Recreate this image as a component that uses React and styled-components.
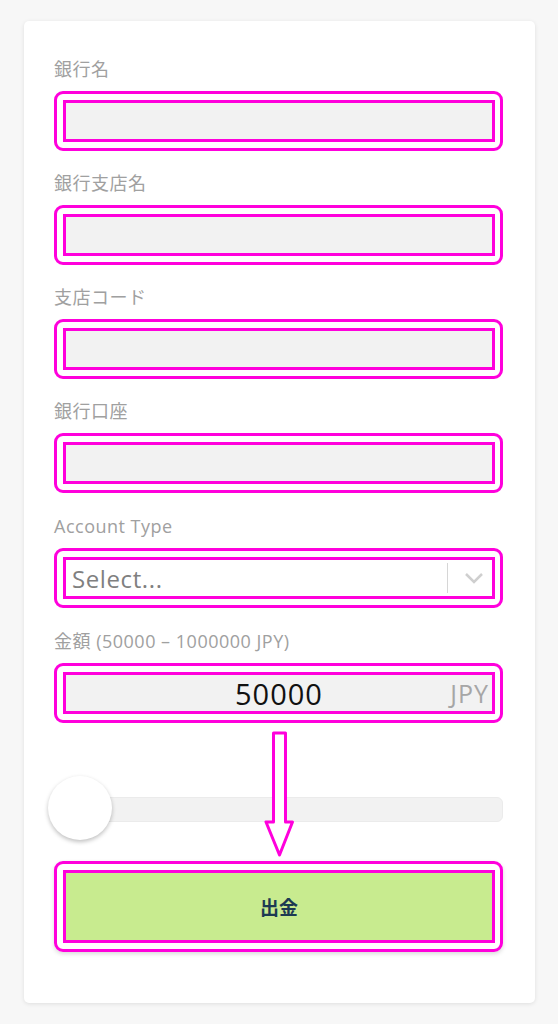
import React from 'react';
import styled, { createGlobalStyle } from 'styled-components';

const MAGENTA = '#ff00dc';

const GlobalStyle = createGlobalStyle`
    html, body {
        margin: 0;
        padding: 0;
        background: #f7f7f7;
        font-family: "Open Sans", "Noto Sans CJK JP", sans-serif;
    }
`;

const Page = styled.div`
    padding: 21px 23px 21px 24px;
`;

const Card = styled.div`
    background: #fff;
    border-radius: 5px;
    box-shadow: 0 1px 4px rgba(0, 0, 0, 0.1);
    box-sizing: border-box;
    display: flex;
    flex-direction: column;
    height: 982px;
    padding: 36px 32px 0 30px;
    position: relative;
`;

const Field = styled.div`
    display: flex;
    flex-direction: column;
    margin-bottom: ${(p) => (p.$wide ? 21 : 20)}px;
`;

const Label = styled.label`
    color: #a0a0a0;
    font-size: 18px;
    letter-spacing: 0.5px;
    line-height: 24px;
    margin-bottom: 10px;
`;

const Highlight = styled.div`
    border: 3px solid ${MAGENTA};
    border-radius: 9px;
    box-shadow: ${(p) => (p.$raised ? '0 2px 4px rgba(0,0,0,0.15)' : 'none')};
    padding: 6px 5px 6px 6px;
`;

const Input = styled.div`
    align-items: center;
    background: ${(p) => p.$bg || '#f2f2f2'};
    border: 3px solid ${MAGENTA};
    box-sizing: border-box;
    display: flex;
    height: 42px;
    position: relative;
`;

const Placeholder = styled.span`
    color: #808080;
    flex: 1;
    font-size: 24px;
    letter-spacing: 0.6px;
    padding-left: 6px;
`;

const Divider = styled.span`
    align-self: center;
    background: #d6d6d6;
    height: 30px;
    width: 1px;
`;

const Chevron = styled.svg`
    height: 12px;
    margin: 0 8px 0 16px;
    width: 20px;
`;

const Amount = styled.span`
    color: #111;
    flex: 1;
    font-size: 29px;
    letter-spacing: 1px;
    text-align: center;
`;

const Unit = styled.span`
    color: #a6a6a6;
    font-size: 25px;
    letter-spacing: 1px;
    position: absolute;
    right: 3px;
`;

const Slider = styled.div`
    align-items: center;
    display: flex;
    height: 66px;
    margin-top: 33px;
    position: relative;
`;

const Track = styled.div`
    background: #f2f2f2;
    border: 1px solid #ebebeb;
    border-radius: 6px;
    box-sizing: border-box;
    flex: 1;
    height: 25px;
`;

const Thumb = styled.div`
    background: #fff;
    border-radius: 50%;
    box-shadow: 0 2px 4px rgba(0, 0, 0, 0.25);
    height: 64px;
    left: -6px;
    position: absolute;
    top: 0;
    width: 64px;
`;

const Arrow = styled.svg`
    left: 240px;
    position: absolute;
    top: 710px;
`;

const SubmitWrap = styled.div`
    margin-top: 19px;
`;

const Submit = styled.button`
    align-items: center;
    background: #c8eb8f;
    border: 3px solid ${MAGENTA};
    box-sizing: border-box;
    color: #1c3a52;
    display: flex;
    font-family: "Noto Sans CJK JP", sans-serif;
    font-size: 19px;
    font-weight: 700;
    height: 73px;
    justify-content: center;
    width: 100%;
`;

const fields = ['銀行名', '銀行支店名', '支店コード', '銀行口座'];

export default function App() {
    return (
        <Page>
            <GlobalStyle />
            <Card>
                {fields.map((label, i) => (
                    <Field key={label} $wide={i === 3}>
                        <Label>{label}</Label>
                        <Highlight>
                            <Input />
                        </Highlight>
                    </Field>
                ))}
                <Field $wide>
                    <Label>Account Type</Label>
                    <Highlight>
                        <Input $bg="#fff">
                            <Placeholder>Select...</Placeholder>
                            <Divider />
                            <Chevron viewBox="0 0 20 12">
                                <path
                                    d="M2 2l8 8 8-8"
                                    fill="none"
                                    stroke="#cfcfcf"
                                    strokeWidth="2.5"
                                />
                            </Chevron>
                        </Input>
                    </Highlight>
                </Field>
                <Field>
                    <Label>金額 (50000 – 1000000 JPY)</Label>
                    <Highlight>
                        <Input>
                            <Amount>50000</Amount>
                            <Unit>JPY</Unit>
                        </Input>
                    </Highlight>
                </Field>
                <Slider>
                    <Track />
                    <Thumb />
                </Slider>
                <SubmitWrap>
                    <Highlight $raised>
                        <Submit type="button">出金</Submit>
                    </Highlight>
                </SubmitWrap>
                <Arrow width="32" height="128" viewBox="0 0 32 128">
                    <path
                        d="M9.5 2h12v89h7L15.5 124 2 91h7.5z"
                        fill="#fff"
                        stroke={MAGENTA}
                        strokeWidth="3"
                        strokeLinejoin="round"
                    />
                </Arrow>
            </Card>
        </Page>
    );
}
